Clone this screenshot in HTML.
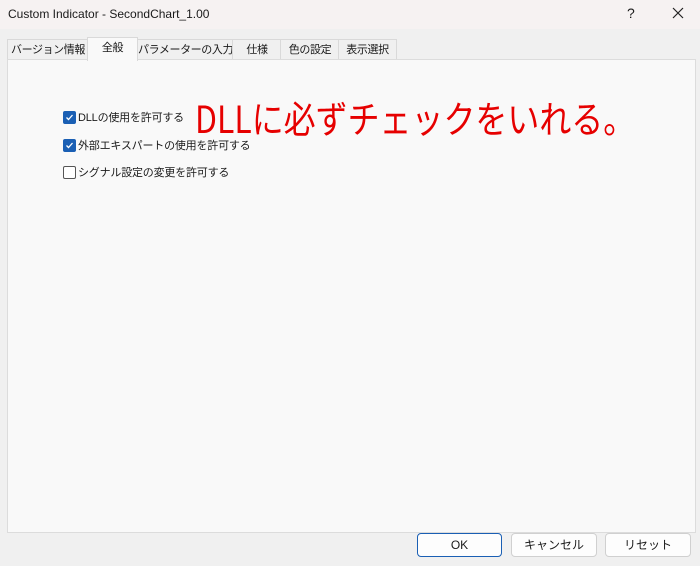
<!DOCTYPE html>
<html><head><meta charset="utf-8"><style>
body{margin:0;width:700px;height:566px;background:#f0f0f0;font-family:"Liberation Sans","Noto Sans CJK JP",sans-serif;font-size:12px;color:#1a1a1a;position:relative;overflow:hidden}
.title{position:absolute;left:0;top:0;width:700px;height:29px;background:#f6f2f2}
.title span{position:absolute;left:8px;top:7px;font-size:12px}
.q{position:absolute;left:627px;top:5px;font-size:14px}
.x{position:absolute;left:670px;top:5px}
.tab{position:absolute;top:39px;height:20px;border:1px solid #d9d9d9;border-bottom:none;background:#f0f0f0;line-height:20px;text-align:center;font-size:11px;letter-spacing:-0.4px;white-space:nowrap;overflow:hidden}
.tab.sel{top:37px;height:23px;background:#f9f9f9;z-index:2;line-height:20px}
.panel{position:absolute;left:7px;top:59px;width:687px;height:472px;background:#f9f9f9;border:1px solid #dcdcdc}
.cb{position:absolute;left:63px;width:11px;height:11px;border-radius:2px}
.cb.on{background:#1a5fb4;border:1px solid #1a5fb4}
.cb.off{border:1px solid #555;background:#fff}
.lbl{position:absolute;left:78px;font-size:11px;letter-spacing:-0.2px;white-space:nowrap}
.red{position:absolute;left:195px;top:90px;color:#e60000;font-size:34px;letter-spacing:0px;font-family:"Noto Sans CJK JP",sans-serif;white-space:nowrap;transform:scale(0.94,1.1);transform-origin:left top}
.btn{position:absolute;top:533px;height:22px;border:1px solid #d0d0d0;border-radius:4px;background:#fdfdfd;text-align:center;line-height:22px;font-size:12px}
</style></head><body>
<div class="title"><span>Custom Indicator - SecondChart_1.00</span><div class="q">?</div>
<svg class="x" width="16" height="16" viewBox="0 0 16 16"><path d="M3 3L13 13M13 3L3 13" stroke="#222" stroke-width="1.2"/></svg></div>
<div class="tab" style="left:7px;width:80px">バージョン情報</div>
<div class="tab sel" style="left:87px;width:49px">全般</div>
<div class="tab" style="left:137px;width:95px">パラメーターの入力</div>
<div class="tab" style="left:232px;width:48px">仕様</div>
<div class="tab" style="left:280px;width:58px">色の設定</div>
<div class="tab" style="left:338px;width:57px">表示選択</div>
<div class="panel"></div>
<div class="cb on" style="top:111px"><svg width="11" height="11" viewBox="0 0 11 11"><path d="M2.5 5.5L4.5 7.5L8.5 3" stroke="#fff" stroke-width="1.3" fill="none"/></svg></div>
<div class="lbl" style="top:109px">DLLの使用を許可する</div>
<div class="cb on" style="top:139px"><svg width="11" height="11" viewBox="0 0 11 11"><path d="M2.5 5.5L4.5 7.5L8.5 3" stroke="#fff" stroke-width="1.3" fill="none"/></svg></div>
<div class="lbl" style="top:137px">外部エキスパートの使用を許可する</div>
<div class="cb off" style="top:166px"></div>
<div class="lbl" style="top:164px">シグナル設定の変更を許可する</div>
<div class="red">DLLに必ずチェックをいれる。</div>
<div class="btn" style="left:417px;width:83px;border-color:#1a5fb4">OK</div>
<div class="btn" style="left:511px;width:84px">キャンセル</div>
<div class="btn" style="left:605px;width:84px">リセット</div>
</body></html>
